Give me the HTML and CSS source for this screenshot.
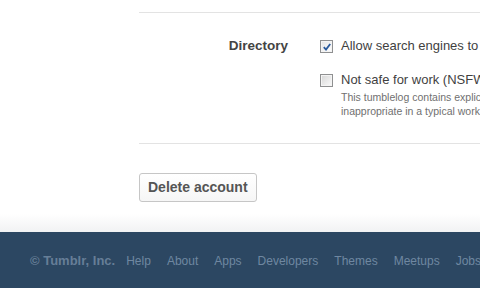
FILE: index.html
```html
<!DOCTYPE html>
<html>
<head>
<meta charset="utf-8">
<link rel="stylesheet" href="styles.css">
</head>
<body>
<div class="page">
  <main class="content">
    <section class="section">
      <div class="label">Directory</div>
      <div class="options">
        <div class="option">
          <span class="cb cb-checked"><svg width="8" height="8" viewBox="0 0 8 8"><path d="M0.8 4.2 L3 6.6 L7.2 1" fill="none" stroke="#2a5a9c" stroke-width="1.8"/></svg></span>
          <div class="opt-text">
            <div class="opt-title">Allow search engines to index your blog</div>
          </div>
        </div>
        <div class="option">
          <span class="cb"></span>
          <div class="opt-text">
            <div class="opt-title">Not safe for work (NSFW)</div>
            <div class="opt-desc">This tumblelog contains explicit material which may be considered<br>inappropriate in a typical workplace.</div>
          </div>
        </div>
      </div>
    </section>
    <div class="actions">
      <button class="btn">Delete account</button>
    </div>
  </main>
  <footer class="footer">
    <span class="copy">© Tumblr, Inc.</span>
    <nav class="links">
      <a>Help</a><a>About</a><a>Apps</a><a>Developers</a><a>Themes</a><a>Meetups</a><a>Jobs</a><a>Privacy</a>
    </nav>
  </footer>
</div>
</body>
</html>
```

FILE: styles.css
```css
html, body {
  margin: 0;
  padding: 0;
}
body {
  width: 480px;
  height: 288px;
  overflow: hidden;
  font-family: "Liberation Sans", Arial, sans-serif;
  background: #2c4762;
}
.page {
  width: 480px;
  height: 288px;
  overflow: hidden;
  display: flex;
  flex-direction: column;
}
.content {
  height: 232px;
  box-sizing: border-box;
  padding-top: 12px;
  padding-left: 139px;
  background: linear-gradient(to bottom, #ffffff 0, #ffffff 214px, #f1f2f3 232px);
  overflow: hidden;
}
.section {
  display: flex;
  width: 700px;
  border-top: 1px solid #e3e3e3;
  border-bottom: 1px solid #e3e3e3;
  padding-top: 24px;
  padding-bottom: 25px;
}
.label {
  width: 149px;
  text-align: right;
  font-weight: bold;
  font-size: 13.5px;
  line-height: 18px;
  color: #444;
}
.options {
  margin-left: 32px;
  display: flex;
  flex-direction: column;
  gap: 16px;
}
.option {
  display: flex;
  align-items: flex-start;
}
.cb {
  width: 11px;
  height: 11px;
  margin-top: 3px;
  border: 1px solid #8f9091;
  background: linear-gradient(135deg, #d6d6d6, #fbfbfb);
  display: flex;
  align-items: center;
  justify-content: center;
  box-shadow: inset 0 0 0 1px #f4f4f4;
  flex: none;
}
.cb-checked {
  background: linear-gradient(135deg, #e4e4e4, #ffffff);
}
.opt-text {
  margin-left: 8px;
  white-space: nowrap;
}
.opt-title {
  font-size: 13px;
  line-height: 18px;
  color: #3f3f3f;
}
.opt-desc {
  margin-top: 1px;
  font-size: 10.5px;
  line-height: 14px;
  color: #707070;
}
.actions {
  padding-top: 29px;
}
.btn {
  font-family: "Liberation Sans", Arial, sans-serif;
  font-weight: bold;
  font-size: 14px;
  line-height: 17px;
  color: #555;
  padding: 5px 8px;
  border: 1px solid #c6c6c6;
  border-radius: 3px;
  background: linear-gradient(to bottom, #ffffff, #f6f6f6);
  margin: 0;
}
.footer {
  flex: 1;
  display: flex;
  align-items: baseline;
  padding-top: 21px;
  padding-left: 30px;
  white-space: nowrap;
  color: #6c839b;
  line-height: 15px;
}
.copy {
  font-weight: bold;
  font-size: 13px;
  color: #667e97;
}
.links {
  display: flex;
  gap: 16px;
  margin-left: 11px;
  font-size: 12px;
}
.links a {
  color: #6f87a1;
}
```
